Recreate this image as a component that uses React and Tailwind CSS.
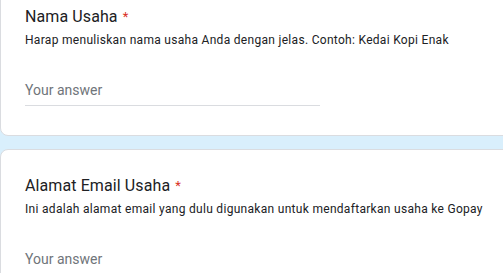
// App.jsx
function Question({ title, description, className = '' }) {
  return (
    <div className={`w-[560px] shrink-0 bg-white border border-[#dadce0] rounded-lg pt-[24px] pb-[24px] px-[24px] ${className}`}>
      <div className="text-[16px] leading-[24px] tracking-[0.1px] text-[#202124]">
        {title}
        <span className="text-[#d93025] text-[13px] align-top ml-[5px]">*</span>
      </div>
      <div className="mt-[2px] text-[12px] leading-[18px] tracking-[0.3px] text-[#202124]">
        {description}
      </div>
      <div className="mt-[31px] w-[295px] border-b border-[#dadce0] pb-[5px]">
        <div className="text-[14px] leading-[20px] text-[#70757a]">Your answer</div>
      </div>
      <div className="h-[5px]"></div>
    </div>
  );
}

export default function App() {
  return (
    <div
      className="w-full h-[273px] overflow-hidden bg-[#d9effc] flex flex-col gap-[13px]"
      style={{ fontFamily: 'Roboto, "Liberation Sans", sans-serif' }}
    >
      <Question
        className="-mt-[20px]"
        title="Nama Usaha"
        description="Harap menuliskan nama usaha Anda dengan jelas. Contoh: Kedai Kopi Enak"
      />
      <Question
        title="Alamat Email Usaha"
        description="Ini adalah alamat email yang dulu digunakan untuk mendaftarkan usaha ke Gopay"
      />
    </div>
  );
}
